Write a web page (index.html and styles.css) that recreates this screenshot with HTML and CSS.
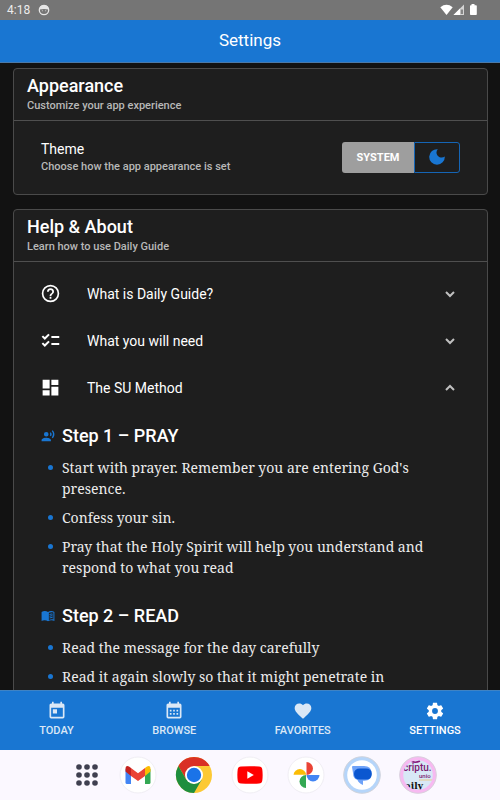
FILE: index.html
```html
<!DOCTYPE html>
<html lang="en">
<head>
<meta charset="utf-8">
<meta name="viewport" content="width=device-width, initial-scale=1">
<title>Settings</title>
<link rel="stylesheet" href="styles.css">
</head>
<body>
<div class="status">
  <span>4:18</span>
  <svg class="status-face" viewBox="0 0 12 12"><circle cx="6" cy="6" r="4.7" fill="none" stroke="#e6e6e6" stroke-width="1.3"/><path d="M1.500 5.500Q1.500 1 6 1T10.500 5.500Q6 4.600 1.500 5.500Z" fill="#e6e6e6"/><circle cx="4.300" cy="6.700" r=".5" fill="#e6e6e6"/><circle cx="7.700" cy="6.700" r=".5" fill="#e6e6e6"/></svg>
  <svg class="status-signals" viewBox="0 0 38 12"><path d="M.3 3.200Q6.500-1.500 12.700 3.200L6.500 11Z" fill="#fff"/><path d="M24 .5V11H13.500Z" fill="#d4d4d4"/><path d="M20 4.500V11H13.500Z" fill="#fff"/><path d="M20.700 5.500H23V10H20.700Z" fill="#858585"/><path d="M31.500 0h3v1.200H36q.8 0 .8.8v8.200q0 .8-.8.800H30.800q-.8 0-.8-.8V2q0-.8.8-.8h.7Z" fill="#fff"/></svg>
</div>
<header class="appbar"><h1>Settings</h1></header>
<main class="content">
  <section class="card">
    <header class="card-head">
      <h2>Appearance</h2>
      <p>Customize your app experience</p>
    </header>
    <div class="theme">
      <div class="theme-text">
        <h3>Theme</h3>
        <p>Choose how the app appearance is set</p>
      </div>
      <div class="toggle">
        <button class="toggle-system" type="button">SYSTEM</button>
        <button class="toggle-dark" type="button" aria-label="Dark theme"><svg viewBox="0 0 16 16"><path d="M8.800.2A7.800 7.800 0 1 0 15.800 7.600C13.600 8.900 11 8.900 9 7C7 5 7 2.200 8.800.2Z" fill="currentColor"/></svg></button>
      </div>
    </div>
  </section>
  <section class="card">
    <header class="card-head">
      <h2>Help &amp; About</h2>
      <p>Learn how to use Daily Guide</p>
    </header>
    <div class="rows">
      <button class="row" type="button">
        <svg class="row-icon" viewBox="0 0 24 24"><path d="M11,18H13V16H11V18M12,2A10,10 0 0,0 2,12A10,10 0 0,0 12,22A10,10 0 0,0 22,12A10,10 0 0,0 12,2M12,20C7.590,20 4,16.410 4,12C4,7.590 7.590,4 12,4C16.410,4 20,7.590 20,12C20,16.410 16.410,20 12,20M12,6A4,4 0 0,0 8,10H10A2,2 0 0,1 12,8A2,2 0 0,1 14,10C14,12 11,11.750 11,15H13C13,12.750 16,12.500 16,10A4,4 0 0,0 12,6Z"/></svg>
        <span>What is Daily Guide?</span>
        <svg class="chevron" viewBox="0 0 12 12"><path d="M2 4L6 8L10 4"/></svg>
      </button>
      <button class="row" type="button">
        <svg class="row-icon" viewBox="0 0 24 24"><path d="M2.700 7L5.500 9.800L10.300 5M2.700 15L5.500 17.800L10.300 13M13 8H22M13 16H22" fill="none" stroke="currentColor" stroke-width="2.300"/></svg>
        <span>What you will need</span>
        <svg class="chevron" viewBox="0 0 12 12"><path d="M2 4L6 8L10 4"/></svg>
      </button>
      <button class="row" type="button" aria-expanded="true">
        <svg class="row-icon" viewBox="0 0 24 24"><path d="M13,3V9H21V3M13,21H21V11H13M3,21H11V15H3M3,13H11V3H3V13Z"/></svg>
        <span>The SU Method</span>
        <svg class="chevron" viewBox="0 0 12 12"><path d="M2 8L6 4L10 8"/></svg>
      </button>
    </div>
    <div class="steps">
      <section>
        <h3 class="step-title"><svg viewBox="0 0 24 24"><path d="M9,5A4,4 0 0,1 13,9A4,4 0 0,1 9,13A4,4 0 0,1 5,9A4,4 0 0,1 9,5M9,15C11.670,15 17,16.340 17,19V21H1V19C1,16.340 6.330,15 9,15M16.760,5.360C18.780,7.560 18.780,10.610 16.760,12.630L15.080,10.940C15.920,9.760 15.920,8.230 15.080,7.050L16.760,5.360M20.070,2C24,6.050 23.970,12.110 20.070,16L18.440,14.370C21.210,11.190 21.210,6.650 18.440,3.630L20.070,2Z"/></svg>Step 1 – PRAY</h3>
        <ul>
          <li>Start with prayer. Remember you are entering God's presence.</li>
          <li>Confess your sin.</li>
          <li>Pray that the Holy Spirit will help you understand and respond to what you read</li>
        </ul>
      </section>
      <section>
        <h3 class="step-title"><svg viewBox="0 0 24 24"><path d="M12 5C9 3 4 3 1 5V20.500C4 19 9 19 12 21C15 19 20 19 23 20.500V5C20 3 15 3 12 5ZM13.500 6.500C16 5.200 19 5.200 21.300 6V18C19 17.300 16 17.500 13.500 18.700Z" fill-rule="evenodd"/><path d="M14.500 8.500Q17 7.500 20 8V9.700Q17 9.200 14.500 10.200ZM14.500 11.500Q17 10.500 20 11V12.700Q17 12.200 14.500 13.200ZM14.500 14.500Q17 13.500 20 14V15.700Q17 15.200 14.500 16.200Z"/></svg>Step 2 – READ</h3>
        <ul>
          <li>Read the message for the day carefully</li>
          <li>Read it again slowly so that it might penetrate in</li>
        </ul>
      </section>
    </div>
  </section>
</main>
<nav class="tabs">
  <a href="#today"><svg viewBox="0 0 24 24"><path d="M7,10H12V15H7M19,19H5V8H19M19,3H18V1H16V3H8V1H6V3H5C3.890,3 3,3.900 3,5V19A2,2 0 0,0 5,21H19A2,2 0 0,0 21,19V5A2,2 0 0,0 19,3Z"/></svg>TODAY</a>
  <a href="#browse"><svg viewBox="0 0 24 24"><path d="M19,19H5V8H19M19,3H18V1H16V3H8V1H6V3H5C3.890,3 3,3.900 3,5V19A2,2 0 0,0 5,21H19A2,2 0 0,0 21,19V5A2,2 0 0,0 19,3M7 10.500H9V12.500H7ZM11 10.500H13V12.500H11ZM15 10.500H17V12.500H15ZM7 14.500H9V16.500H7ZM11 14.500H13V16.500H11ZM15 14.500H17V16.500H15Z"/></svg>BROWSE</a>
  <a href="#favorites"><svg viewBox="0 0 24 24"><path d="M12,21.350L10.550,20.030C5.400,15.360 2,12.270 2,8.500C2,5.410 4.420,3 7.500,3C9.240,3 10.910,3.810 12,5.080C13.090,3.810 14.760,3 16.500,3C19.580,3 22,5.410 22,8.500C22,12.270 18.600,15.360 13.450,20.030L12,21.350Z"/></svg>FAVORITES</a>
  <a href="#settings" class="active" aria-current="page"><svg viewBox="0 0 24 24"><path d="M12,15.500A3.500,3.500 0 0,1 8.500,12A3.500,3.500 0 0,1 12,8.500A3.500,3.500 0 0,1 15.500,12A3.500,3.500 0 0,1 12,15.500M19.430,12.970C19.470,12.650 19.500,12.330 19.500,12C19.500,11.670 19.470,11.340 19.430,11L21.540,9.370C21.730,9.220 21.780,8.950 21.660,8.730L19.660,5.270C19.540,5.050 19.270,4.960 19.050,5.050L16.560,6.050C16.040,5.660 15.500,5.320 14.870,5.070L14.500,2.420C14.460,2.180 14.250,2 14,2H10C9.750,2 9.540,2.180 9.500,2.420L9.130,5.070C8.500,5.320 7.960,5.660 7.440,6.050L4.950,5.050C4.730,4.960 4.460,5.050 4.340,5.270L2.340,8.730C2.210,8.950 2.270,9.220 2.460,9.370L4.570,11C4.530,11.340 4.500,11.670 4.500,12C4.500,12.330 4.530,12.650 4.570,12.970L2.460,14.630C2.270,14.780 2.210,15.050 2.340,15.270L4.340,18.730C4.460,18.950 4.730,19.030 4.950,18.950L7.440,17.940C7.960,18.340 8.500,18.680 9.130,18.930L9.500,21.580C9.540,21.820 9.750,22 10,22H14C14.250,22 14.460,21.820 14.500,21.580L14.870,18.930C15.500,18.670 16.040,18.340 16.560,17.940L19.050,18.950C19.270,19.030 19.540,18.950 19.660,18.730L21.660,15.270C21.780,15.050 21.730,14.780 21.540,14.630L19.430,12.970Z"/></svg>SETTINGS</a>
</nav>
<div class="dock">
  <button type="button" class="apps" aria-label="All apps"><svg viewBox="0 0 22 22" fill="#3f4050"><circle cx="3" cy="3" r="2.800"/><circle cx="11" cy="3" r="2.800"/><circle cx="19" cy="3" r="2.800"/><circle cx="3" cy="11" r="2.800"/><circle cx="11" cy="11" r="2.800"/><circle cx="19" cy="11" r="2.800"/><circle cx="3" cy="19" r="2.800"/><circle cx="11" cy="19" r="2.800"/><circle cx="19" cy="19" r="2.800"/></svg></button>
  <button type="button" aria-label="Gmail"><svg viewBox="0 0 38 38"><circle cx="19" cy="19" r="18" fill="#fff" stroke="#f0eef4"/><path d="M6.500 13V26.500Q6.500 28 8 28H12V16.500Z" fill="#4285f4"/><path d="M31.500 13V26.500Q31.500 28 30 28H26V16.500Z" fill="#34a853"/><path d="M26 12L28 10.500Q31.500 9 31.500 13V15.500L26 20Z" fill="#fbbc04"/><path d="M12 12L10 10.500Q6.500 9 6.500 13V15.500L12 20Z" fill="#c5221f"/><path d="M12 12L19 17.300L26 12V20L19 25L12 20Z" fill="#ea4335"/></svg></button>
  <button type="button" aria-label="Chrome"><svg viewBox="0 0 38 38"><circle cx="19" cy="19" r="18" fill="#fcc934"/><path d="M3.400 10A18 18 0 0 1 34.600 10H19L11.200 23.500Z" fill="#d93025"/><path d="M3.400 10A18 18 0 0 0 19 37L26.800 23.500L19 28L11.200 23.500Z" fill="#1e8e3e"/><circle cx="19" cy="19" r="9" fill="#fff"/><circle cx="19" cy="19" r="7.200" fill="#1a73e8"/></svg></button>
  <button type="button" aria-label="YouTube"><svg viewBox="0 0 38 38"><circle cx="19" cy="19" r="18" fill="#fff" stroke="#f0eef4"/><path d="M10 10.500Q19 9.800 28 10.500Q31 10.700 31.300 13.500Q32 19 31.300 24.500Q31 27.300 28 27.500Q19 28.200 10 27.500Q7 27.300 6.700 24.500Q6 19 6.700 13.500Q7 10.700 10 10.500Z" fill="#f00"/><path d="M16.300 15.200V22.800L22.800 19Z" fill="#fff"/></svg></button>
  <button type="button" aria-label="Photos"><svg viewBox="0 0 38 38"><circle cx="19" cy="19" r="18" fill="#fff" stroke="#f0eef4"/><path d="M19.500 6A6.400 6.400 0 0 1 19.500 19Z" fill="#ea4335"/><path d="M32.500 19A6.400 6.400 0 0 1 19.500 19Z" fill="#4285f4"/><path d="M19 32A6.400 6.400 0 0 1 19 19Z" fill="#34a853"/><path d="M6.500 18.700A6.400 6.400 0 0 1 19.200 18.700Z" fill="#fbbc04"/></svg></button>
  <button type="button" aria-label="Messages"><svg viewBox="0 0 38 38"><circle cx="19" cy="19" r="18.300" fill="#b5d5fa" stroke="#cfd3dc"/><circle cx="19" cy="19" r="14.800" fill="#fff"/><path d="M15 10H21Q28.500 10 28.500 17Q28.500 24.500 21.500 24.800H20V29Q15.500 27 14.500 24Q10 22.500 10 17L9 11Q9 10 10 10Z" fill="#6ea2f8"/><path d="M17 12.500H23Q28.800 12.500 28.800 18Q28.800 23.500 23 23.500H17Q11 23.500 11 18Q11 12.500 17 12.500Z" fill="#0b57d0"/></svg></button>
  <button type="button" aria-label="Daily Guide"><svg viewBox="0 0 38 38"><clipPath id="round"><circle cx="19" cy="19" r="14.800"/></clipPath><circle cx="19" cy="19" r="18.300" fill="#f7b9f1" stroke="#d8cfdc"/><g clip-path="url(#round)"><rect width="38" height="38" fill="#d8e8f6"/><path d="M12 5Q16 7.500 21 5" fill="none" stroke="#8a1a7c" stroke-width="1.500"/><text x="4" y="15" class="logo-name">criptu.</text><text x="20" y="22" class="logo-sub">unio</text><path d="M20 24H34" stroke="#e8c98c"/><text x="6" y="33" class="logo-title">aily</text></g></svg></button>
</div>
</body>
</html>
```
FILE: styles.css
```css
* { box-sizing: border-box; }
body {
  margin: 0;
  height: 100vh;
  display: flex;
  flex-direction: column;
  overflow: hidden;
  background: #121212;
  color: #fff;
  font-family: Roboto, sans-serif;
}
h1, h2, h3, p, ul { margin: 0; padding: 0; }
button { font: inherit; color: inherit; border: 0; padding: 0; background: none; }
svg { display: block; }

.status {
  flex: none;
  display: flex;
  align-items: center;
  gap: 8px;
  height: 20px;
  padding: 0 22px 0 7px;
  background: #757575;
  color: #ececec;
  font-size: 12px;
}
.status-face { width: 12px; height: 12px; }
.status-signals { width: 38px; height: 12px; margin-left: auto; }

.appbar {
  flex: none;
  height: 43px;
  display: flex;
  align-items: center;
  justify-content: center;
  padding-bottom: 2px;
  background: #1976d2;
  border-bottom: 1px solid #4b79a8;
}
.appbar h1 { font-size: 17px; font-weight: 400; }

.content {
  flex: 1;
  min-height: 0;
  overflow-y: auto;
  scrollbar-width: none;
  padding: 5px 12px 0 13px;
  display: flex;
  flex-direction: column;
  gap: 14px;
}
.card {
  flex: none;
  background: #1e1e1e;
  border: 1px solid #4a4a4a;
  border-radius: 4px;
}
.card-head {
  padding: 4px 13px 6px;
  border-bottom: 1px solid #4f4f4f;
}
.card-head h2 { font-size: 18px; font-weight: 500; line-height: 25px; }
.card-head p, .theme p {
  font-size: 11px;
  font-weight: 500;
  line-height: 16px;
  color: #b8b8b8;
}

.theme {
  display: flex;
  align-items: center;
  justify-content: space-between;
  padding: 18px 27px 19px;
}
.theme h3 { font-size: 14px; font-weight: 400; line-height: 20px; }
.toggle { display: flex; height: 31px; }
.toggle-system {
  width: 72px;
  background: #9e9e9e;
  border-radius: 3px 0 0 3px;
  font-size: 11px;
  font-weight: 700;
}
.toggle-dark {
  display: flex;
  align-items: center;
  justify-content: center;
  width: 46px;
  border: 1px solid #1565b5;
  border-radius: 0 3px 3px 0;
  color: #1976d2;
}
.toggle-dark svg { width: 16px; height: 16px; }

.rows { display: flex; flex-direction: column; padding-top: 8px; }
.row {
  display: flex;
  align-items: center;
  height: 47px;
  padding: 0 31px 0 26px;
  font-size: 14px;
  text-align: left;
}
.row span { flex: 1; padding-left: 26px; }
.row-icon { width: 21px; height: 21px; fill: currentColor; }
.chevron { width: 12px; height: 12px; fill: none; stroke: #c0c0c0; stroke-width: 2; }

.steps {
  display: flex;
  flex-direction: column;
  gap: 26px;
  padding: 13px 27px 40px;
}
.step-title {
  display: flex;
  align-items: center;
  gap: 7px;
  font-size: 18px;
  font-weight: 500;
  line-height: 24px;
}
.step-title svg { width: 14px; height: 14px; fill: #1976d2; }
.steps ul {
  display: flex;
  flex-direction: column;
  gap: 8px;
  padding: 9px 0 0 21px;
  list-style: none;
  font-family: "Noto Serif", "Droid Serif", "DejaVu Serif", serif;
  font-size: 14px;
  line-height: 21px;
  color: #ececec;
}
.steps li { position: relative; }
.steps li::before {
  content: "";
  position: absolute;
  left: -14px;
  top: 8px;
  width: 5px;
  height: 5px;
  border-radius: 50%;
  background: #1976d2;
}

.tabs {
  flex: none;
  display: flex;
  height: 60px;
  background: #1976d2;
  border-top: 1px solid #3f83c4;
}
.tabs a {
  flex: 1 1 auto;
  display: flex;
  flex-direction: column;
  align-items: center;
  justify-content: center;
  gap: 2px;
  padding-bottom: 2px;
  color: #dbe8f6;
  font-size: 11px;
  font-weight: 500;
  line-height: 16px;
  text-decoration: none;
}
.tabs .active { color: #fff; }
.tabs svg { width: 20px; height: 20px; fill: currentColor; }

.dock {
  flex: none;
  display: flex;
  align-items: center;
  justify-content: center;
  gap: 18px;
  height: 50px;
  padding-left: 12px;
  background: #fbf8ff;
}
.dock svg { width: 38px; height: 38px; }
.dock .apps { margin-right: 3px; }
.dock .apps svg { width: 22px; height: 22px; }
.logo-name { font: 500 10px Roboto, sans-serif; fill: #7b1a70; }
.logo-sub { font: 500 6px Roboto, sans-serif; fill: #7b1a70; }
.logo-title { font: 700 9px "DejaVu Serif", serif; fill: #111; }
```
